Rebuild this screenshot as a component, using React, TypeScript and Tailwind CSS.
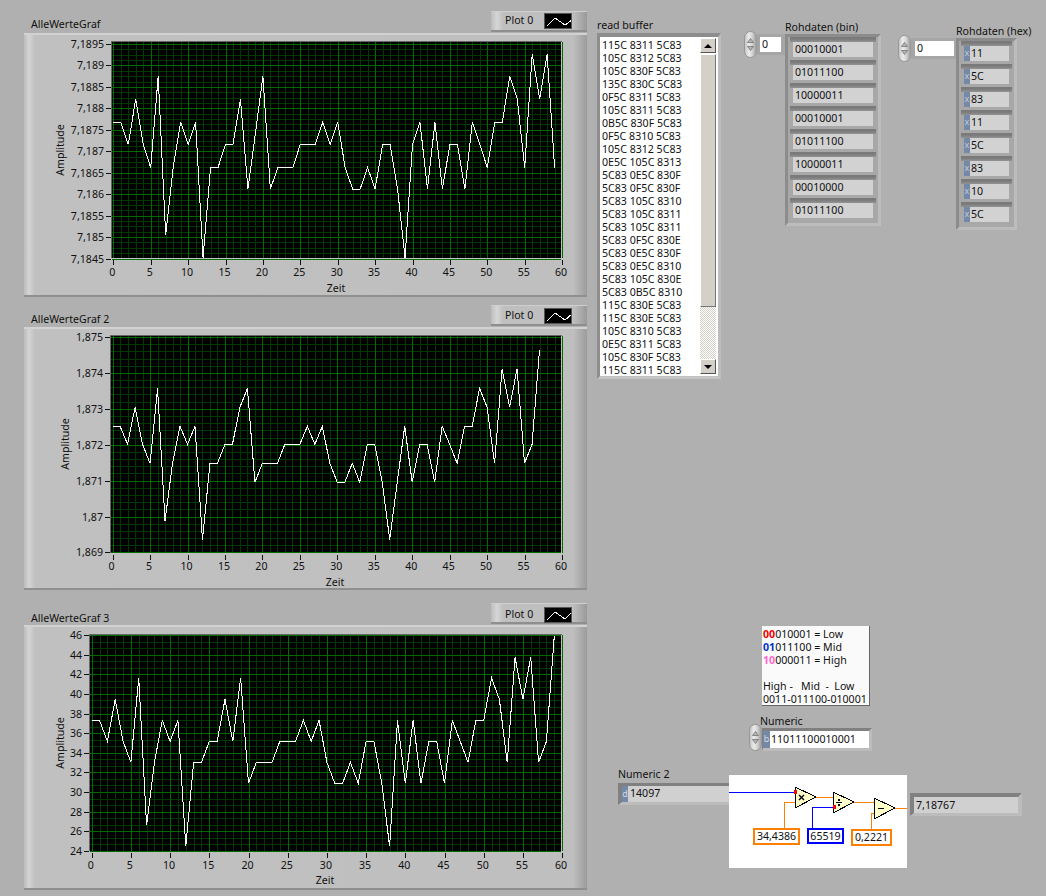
const font = "font-['Noto_Sans',sans-serif]";

const g1 = [262,262,328,192,328,398,124,600,398,262,328,262,668,398,398,328,328,192,462,294,124,462,398,398,398,328,328,328,262,328,262,398,462,462,398,462,328,328,462,668,328,262,462,262,462,328,328,462,262,328,398,262,262,124,192,398,58,192,58,398];
const g2 = [292,292,346,235,346,403,178,575,403,292,346,292,632,403,403,346,346,235,178,460,403,403,403,346,346,346,292,346,292,403,460,460,403,460,346,346,460,632,460,292,460,346,346,460,292,346,403,292,292,178,235,403,120,235,120,403,346,62];
const g3 = [277,277,340,214,340,403,150,592,403,277,340,277,655,403,403,340,340,214,340,150,466,403,403,403,340,340,340,277,340,277,403,466,466,403,466,340,340,466,655,277,466,277,466,340,340,466,277,340,403,277,277,150,214,403,88,214,88,403,340,25];

const buffer = [
  "115C 8311 5C83","105C 8312 5C83","105C 830F 5C83","135C 830C 5C83","0F5C 8311 5C83",
  "105C 8311 5C83","0B5C 830F 5C83","0F5C 8310 5C83","105C 8312 5C83","0E5C 105C 8313",
  "5C83 0E5C 830F","5C83 0F5C 830F","5C83 105C 8310","5C83 105C 8311","5C83 105C 8311",
  "5C83 0F5C 830E","5C83 0E5C 830F","5C83 0E5C 8310","5C83 105C 830E","5C83 0B5C 8310",
  "115C 830E 5C83","115C 830E 5C83","105C 8310 5C83","0E5C 8311 5C83","105C 830F 5C83","115C 8311 5C83",
];
const bins = ["00010001","01011100","10000011","00010001","01011100","10000011","00010000","01011100"];
const hexes = ["11","5C","83","11","5C","83","10","5C"];

type Chart = {
  name: string;
  frameTop: number;
  frameHeight: number;
  gap: number;
  titlePad: string;
  legendPad: string;
  originY: number;
  data: number[];
  x0: number;
  dx: number;
  left: number;
  top: number;
  bottom: number;
  y0: number;
  yStep: number;
  yLabels: string[];
  minors: number;
  ampX: number;
  ampY: number;
  zeitX: number;
  zeitY: number;
  xLabelY: number;
  swatch: string;
};

const charts: Chart[] = [
  {
    name: "AlleWerteGraf", frameTop: 33, frameHeight: 264, gap: 0, titlePad: "pb-[2px]", legendPad: "pt-0", originY: 35, data: g1,
    x0: 113.3, dx: 7.48, left: 112, top: 42, bottom: 258, y0: 44, yStep: 21.45,
    yLabels: ["7,1895","7,189","7,1885","7,188","7,1875","7,187","7,1865","7,186","7,1855","7,185","7,1845"],
    minors: 4, ampX: 60, ampY: 150, zeitX: 336, zeitY: 288, xLabelY: 272, swatch: "2,12 10,4 20,11 27,6",
  },
  {
    name: "AlleWerteGraf 2", frameTop: 328, frameHeight: 263, gap: 8, titlePad: "pb-[1px]", legendPad: "pt-[2px]", originY: 330, data: g2,
    x0: 112.6, dx: 7.49, left: 111, top: 337, bottom: 554, y0: 338, yStep: 35.9,
    yLabels: ["1,875","1,874","1,873","1,872","1,871","1,87","1,869"],
    minors: 5, ampX: 65, ampY: 445, zeitX: 335, zeitY: 583, xLabelY: 567, swatch: "2,12 10,4 20,11 27,5",
  },
  {
    name: "AlleWerteGraf 3", frameTop: 627, frameHeight: 265, gap: 13, titlePad: "pb-0", legendPad: "pt-[4px]", originY: 630, data: g3,
    x0: 91.7, dx: 7.84, left: 90, top: 637, bottom: 853, y0: 637, yStep: 19.63,
    yLabels: ["46","44","42","40","38","36","34","32","30","28","26","24"],
    minors: 3, ampX: 60, ampY: 745, zeitX: 325, zeitY: 882, xLabelY: 867, swatch: "2,12 10,4 20,11 27,4",
  },
];

function GraphSvg({ c }: { c: Chart }) {
  const ox = 24;
  const oy = c.frameTop;
  const right = 561;
  const ticks = Array.from({ length: 61 }, (_, i) => i);
  const hLines: { y: number; major: boolean }[] = [];
  const steps = (c.yLabels.length - 1) * c.minors;
  for (let k = 0; k <= steps; k++) {
    hLines.push({ y: Math.round(c.y0 + (k * c.yStep) / c.minors) + 0.5, major: k % c.minors === 0 });
  }
  const points = c.data
    .map((z, i) => `${c.x0 + c.dx * i},${c.originY + z / 3}`)
    .join(" ");
  return (
    <svg width={563} height={c.frameHeight} viewBox={`${ox} ${oy} 563 ${c.frameHeight}`} className="block" fontSize={10.6} fill="#111">
      <rect x={c.left} y={c.top} width={right - c.left} height={c.bottom - c.top} fill="#000" />
      <g shapeRendering="crispEdges" strokeWidth={1}>
        {hLines.filter((l) => !l.major).map((l) => (
          <line key={l.y} x1={c.left} x2={right} y1={l.y} y2={l.y} stroke="#003a00" />
        ))}
        {ticks.filter((i) => i % 5 !== 0).map((i) => {
          const x = Math.round(c.x0 + c.dx * i) + 0.5;
          return <line key={i} x1={x} x2={x} y1={c.top} y2={c.bottom} stroke="#003a00" />;
        })}
        {hLines.filter((l) => l.major).map((l) => (
          <g key={l.y}>
            <line x1={c.left} x2={right} y1={l.y} y2={l.y} stroke="#006c00" />
            <line x1={c.left - 6} x2={c.left - 1} y1={l.y} y2={l.y} stroke="#111" />
          </g>
        ))}
        {ticks.filter((i) => i % 5 === 0).map((i) => {
          const x = Math.round(c.x0 + c.dx * i) + 0.5;
          return (
            <g key={i}>
              <line x1={x} x2={x} y1={c.top} y2={c.bottom} stroke="#006c00" />
              <line x1={x} x2={x} y1={c.bottom + 2} y2={c.bottom + 7} stroke="#111" />
            </g>
          );
        })}
        <path d={`M${c.left - 0.5} ${c.bottom}V${c.top - 0.5}H${right + 0.5}`} fill="none" stroke="#666" />
        <polyline points={points} fill="none" stroke="#fff" />
      </g>
      {c.yLabels.map((t, i) => (
        <text key={t} x={c.left - 8} y={c.y0 + i * c.yStep + 4} textAnchor="end">{t}</text>
      ))}
      {ticks.filter((i) => i % 5 === 0).map((i) => (
        <text key={i} x={c.x0 + c.dx * i - 1} y={c.xLabelY + 4} textAnchor="middle">{i}</text>
      ))}
      <text x={c.zeitX} y={c.zeitY + 4} textAnchor="middle">Zeit</text>
      <text transform={`translate(${c.ampX + 4} ${c.ampY}) rotate(-90)`} textAnchor="middle">Amplitude</text>
    </svg>
  );
}

function Graph({ c }: { c: Chart }) {
  return (
    <div style={{ marginTop: c.gap }}>
      <div className="flex items-end justify-between h-[22px]">
        <span className={`pl-[7px] leading-[13px] ${c.titlePad}`}>{c.name}</span>
        <div className={`flex items-center w-[96px] h-[21px] mb-[1px] pl-[14px] gap-[11px] border-t border-t-[#cfcfcf] border-b-2 border-b-[#8e8e8e] bg-[linear-gradient(90deg,#bdbdbd_0,#d6d6d6_6px,#bfbfbf_12px,#bfbfbf_calc(100%-14px),#999_100%)] ${c.legendPad}`}>
          <span>Plot 0</span>
          <svg width={28} height={16} className="bg-black border border-[#555]" shapeRendering="crispEdges">
            <polyline points={c.swatch} fill="none" stroke="#fff" />
          </svg>
        </div>
      </div>
      <div
        style={{ height: c.frameHeight }}
        className="w-[563px] overflow-hidden bg-[linear-gradient(90deg,#bcbcbc_0,#d4d4d4_5px,#c0c0c0_11px,#bfbfbf_calc(100%-14px),#9c9c9c_100%)] shadow-[inset_0_2px_0_#d2d2d2,inset_0_-2px_0_#8f8f8f]"
      >
        <GraphSvg c={c} />
      </div>
    </div>
  );
}

function Stepper() {
  return (
    <div className="flex flex-col items-center justify-center gap-[3px] w-[13px] h-[27px] rounded-full border border-[#989898] bg-[linear-gradient(90deg,#c4c4c4,#ececec_35%,#d4d4d4_65%,#a0a0a0)]">
      <svg width={7} height={5}><path d="M3.5 0.5 L6.5 4.5 H0.5Z" fill="#b4b4b4" stroke="#6a6a6a" strokeWidth={0.7} /></svg>
      <svg width={7} height={5}><path d="M3.5 4.5 L6.5 0.5 H0.5Z" fill="#b4b4b4" stroke="#6a6a6a" strokeWidth={0.7} /></svg>
    </div>
  );
}

function Cell({ value, radix, width }: { value: string; radix?: string; width: string }) {
  return (
    <div className={`h-[23px] pt-[5px] pl-[3px] pr-[3px] pb-[3px] bg-[linear-gradient(#7a7a7a_0,#7a7a7a_2px,#939393_5px,#a8a8a8_5px)] ${width}`}>
      <div className="flex h-[15px] items-center bg-[#d2d2d2] leading-[15px] overflow-hidden">
        {radix && (
          <span className="w-[6px] h-full bg-[#7488a8] text-[#c4ccd8] text-[9px] text-center leading-[14px] shrink-0">{radix}</span>
        )}
        <span className={radix ? "pl-[1px]" : "pl-[2px]"}>{value}</span>
      </div>
    </div>
  );
}

function ArrayFrame({ label, items, radix, width, cellWidth, mt }: { label: string; items: string[]; radix?: string; width: string; cellWidth: string; mt: string }) {
  return (
    <div className={mt}>
      <div className="h-[13px] leading-[13px] whitespace-nowrap">{label}</div>
      <div className={`${width} pb-[2px] flex flex-col items-center bg-[#a8a8a8] border-[3px] border-t-[#8c8c8c] border-l-[#8c8c8c] border-r-[#bcbcbc] border-b-[#bcbcbc]`}>
        {items.map((v, i) => (
          <Cell key={i} value={v} radix={radix} width={cellWidth} />
        ))}
      </div>
    </div>
  );
}

function IndexBox({ inputWidth, boxPad }: { inputWidth: string; boxPad: string }) {
  return (
    <div className="flex items-center">
      <Stepper />
      <div className={`${boxPad} py-[3px] bg-[#a6a6a6]`}>
        <div className={`${inputWidth} h-[15px] bg-white pl-[2px] leading-[15px]`}>0</div>
      </div>
    </div>
  );
}

function ReadBuffer() {
  return (
    <div className="ml-[10px] mt-[19px]">
      <div className="h-[14px] leading-[13px]">read buffer</div>
      <div className="w-[124px] h-[346px] border-t-[4px] border-l-[3px] border-r-[3px] border-b-[3px] border-t-[#8d8d8d] border-l-[#8d8d8d] border-r-[#bdbdbd] border-b-[#c4c4c4] bg-[#a8a8a8]">
        <div className="flex h-full bg-white pl-[2px] pr-[2px] pt-[1px]">
          <div className="flex-1 h-[338px] pt-[1px] overflow-hidden">
            {buffer.map((l, i) => (
              <div key={i} className="h-[13px] leading-[13px] whitespace-nowrap">{l}</div>
            ))}
          </div>
          <div className="w-[16px] flex flex-col">
            <div className="h-[15px] flex items-center justify-center bg-[#d4d0c8] border border-t-white border-l-white border-r-[#555] border-b-[#555]">
              <svg width={8} height={4}><path d="M4 0 L8 4 H0Z" fill="#000" /></svg>
            </div>
            <div className="h-[253px] mt-[1px] bg-[#d4d0c8] border border-t-white border-l-white border-r-[#777] border-b-[#777]" />
            <div className="h-[52px] bg-[repeating-conic-gradient(#d4d0c8_0_25%,#fff_0_50%)] bg-[length:2px_2px]" />
            <div className="h-[15px] flex items-center justify-center bg-[#d4d0c8] border border-t-white border-l-white border-r-[#555] border-b-[#555]">
              <svg width={8} height={4}><path d="M0 0 H8 L4 4Z" fill="#000" /></svg>
            </div>
          </div>
        </div>
      </div>
    </div>
  );
}

function Diagram() {
  const orange = "#ff8000";
  const blue = "#0000ff";
  const yellow = "#ffffcc";
  return (
    <div className="relative w-[178px] h-[93px] bg-white shrink-0">
      <svg width={178} height={93} viewBox="729 775 178 93" className="block" shapeRendering="crispEdges">
        <path d="M729 792.5H795" fill="none" stroke={blue} />
        <path d="M784.5 828V802.5H795M816 797.5H833M854 802.5H874M871.5 829V813.5H874M895 808.5H907" fill="none" stroke={orange} />
        <path d="M812.5 828V807.5H833" fill="none" stroke={blue} />
        <polygon points="795,787 816,797 795,808" fill={yellow} stroke="#000" />
        <polygon points="833,792 854,802 833,813" fill={yellow} stroke="#000" />
        <polygon points="874,798 895,808 874,819" fill={yellow} stroke="#000" />
        <rect x={794} y={790} width={3} height={4} fill="#f00" />
        <rect x={833} y={805} width={3} height={4} fill="#f00" />
        <path d="M799 795l5 5m0-5l-5 5" stroke="#000" strokeWidth={1.4} shapeRendering="auto" />
        <path d="M836 802.5h6" stroke="#000" />
        <rect x={838} y={799} width={2} height={2} fill="#000" />
        <rect x={838} y={804} width={2} height={2} fill="#000" />
        <path d="M878 808.5h6" stroke="#000" />
      </svg>
      <div className="absolute left-[24px] top-[53px] w-[47px] h-[17px] border-2 border-[#ff8000] bg-white leading-[13px] text-center">34,4386</div>
      <div className="absolute left-[78px] top-[53px] w-[37px] h-[16px] border-2 border-[#0000ff] bg-white leading-[12px] text-center">65519</div>
      <div className="absolute left-[122px] top-[54px] w-[41px] h-[17px] border-2 border-[#ff8000] bg-white leading-[13px] text-center">0,2221</div>
    </div>
  );
}

export default function App() {
  return (
    <div className={`flex w-[1046px] h-[896px] overflow-hidden bg-[#b0b0b0] text-[10.6px] text-[#111] ${font}`}>
      <div className="w-[587px] shrink-0 pl-[24px] pt-[11px]">
        {charts.map((c) => (
          <Graph key={c.name} c={c} />
        ))}
      </div>
      <div className="flex-1 flex flex-col">
        <div className="flex items-start h-[590px]">
          <ReadBuffer />
          <div className="ml-[23px] mt-[31px]"><IndexBox inputWidth="w-[21px]" boxPad="pl-[3px] pr-[4px]" /></div>
          <ArrayFrame label="Rohdaten (bin)" items={bins} width="w-[96px]" cellWidth="w-[86px]" mt="mt-[21px]" />
          <div className="ml-[17px] mt-[35px]"><IndexBox inputWidth="w-[39px]" boxPad="pl-[4px] pr-[2px]" /></div>
          <ArrayFrame label="Rohdaten (hex)" items={hexes} radix="x" width="w-[61px]" cellWidth="w-[51px]" mt="mt-[25px]" />
        </div>
        <div className="ml-[175px] mt-[36px] w-[108px] h-[80px] bg-[#fafafa] border-r border-b border-r-[#666] border-b-[#666] pl-[1px] pt-[2px] leading-[13px] whitespace-nowrap">
          <div><b className="text-[#f00000]">00</b>010001 = Low</div>
          <div><b className="text-[#0033cc]">01</b>011100 = Mid</div>
          <div><b className="text-[#ff66cc]">10</b>000011 = High</div>
          <div className="h-[13px]" />
          <div>High -&nbsp;&nbsp; Mid&nbsp; -&nbsp; Low</div>
          <div>0011-011100-010001</div>
        </div>
        <div className="ml-[162px] mt-[8px] flex items-end">
          <Stepper />
          <div>
            <div className="h-[14px] pt-[1px] leading-[13px] -ml-[2px]">Numeric</div>
            <div className="w-[110px] h-[23px] border-t-[3px] border-l-[1px] border-r-[3px] border-b-[3px] border-t-[#808080] border-l-[#808080] border-r-[#bcbcbc] border-b-[#bcbcbc] bg-[#a8a8a8]">
              <div className="flex h-[17px] bg-white items-center">
                <span className="w-[7px] h-full bg-[#7488a8] text-[#d0d8e4] text-[9px] text-center leading-[16px]">b</span>
                <span className="pl-[1px]">11011100010001</span>
              </div>
            </div>
          </div>
        </div>
        <div className="flex items-start ml-[31px] mt-[24px]">
          <div className="mt-[-7px]">
            <div className="h-[15px] leading-[13px]">Numeric 2</div>
            <div className="w-[111px] h-[22px] border-t-[3px] border-l-[4px] border-b-[3px] border-t-[#808080] border-l-[#808080] border-b-[#bcbcbc] bg-[#a8a8a8]">
              <div className="flex h-[16px] bg-[#d0d0d0] items-center">
                <span className="w-[6px] h-full bg-[#7488a8] text-[#d0d8e4] text-[9px] text-center leading-[15px]">d</span>
                <span className="pl-[2px]">14097</span>
              </div>
            </div>
          </div>
          <Diagram />
          <div className="ml-[3px] mt-[18px] w-[112px] h-[23px] border-t-[4px] border-l-[4px] border-r-[4px] border-b-[3px] border-t-[#808080] border-l-[#808080] border-r-[#bcbcbc] border-b-[#bcbcbc] bg-[#d0d0d0] pl-[2px] leading-[16px]">7,18767</div>
        </div>
      </div>
    </div>
  );
}
